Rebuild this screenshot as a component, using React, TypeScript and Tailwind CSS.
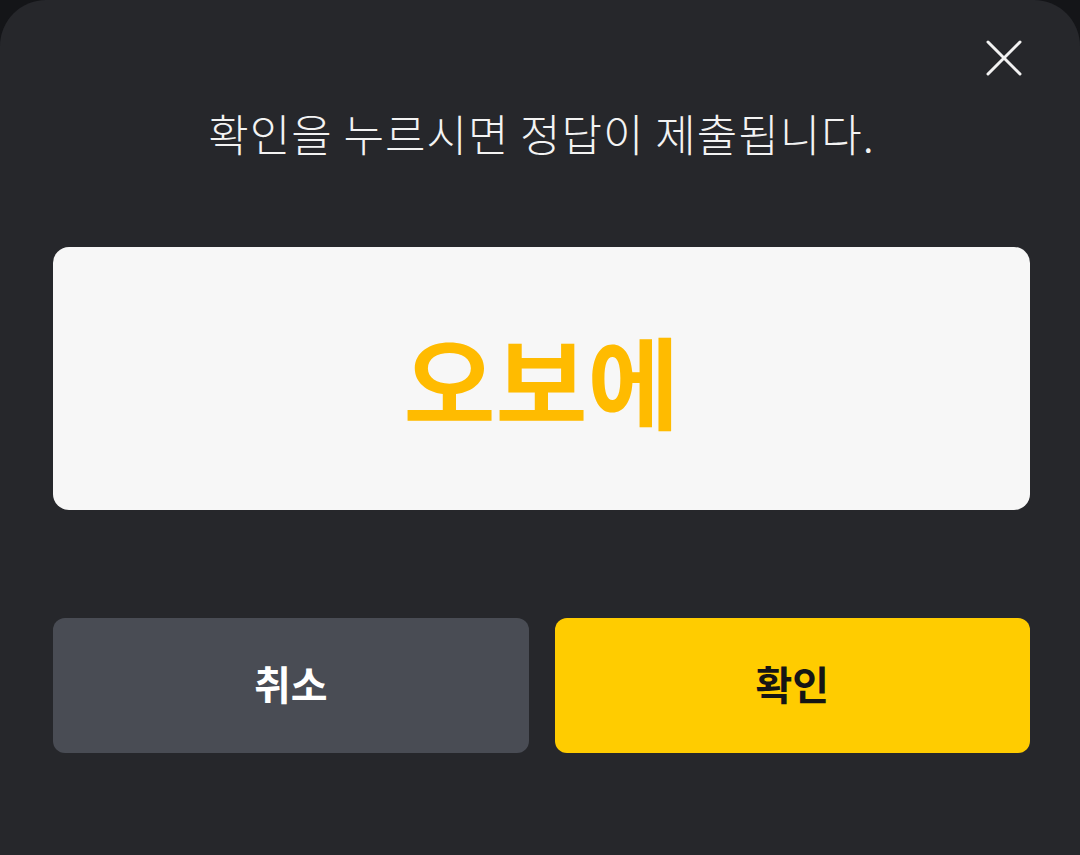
const App = () => {
  return (
    <div
      className="w-[1080px] h-[855px] bg-[#141518] overflow-hidden"
      style={{ fontFamily: '"Noto Sans CJK KR", "Noto Sans", sans-serif' }}
    >
      <div className="relative h-full rounded-t-[46px] bg-[#26272b] pl-[53px] pr-[50px] pt-[107px]">
        <button className="absolute top-[36px] right-[54px] w-[44px] h-[44px] flex items-center justify-center">
          <svg width="36" height="36" viewBox="0 0 36 36" fill="none">
            <path d="M2 2L34 34M34 2L2 34" stroke="#f2f2f2" strokeWidth="3" strokeLinecap="round" />
          </svg>
        </button>
        <div className="text-center text-[44px] leading-[52px] text-[#f3f3f3] font-light tracking-[1px]">
          확인을 누르시면 정답이 제출됩니다.
        </div>
        <div className="mt-[88px] h-[263px] rounded-[16px] bg-[#f7f7f7] flex items-center justify-center">
          <span className="text-[100px] leading-none font-bold text-[#ffbb00]">오보에</span>
        </div>
        <div className="mt-[108px] flex gap-[26px]">
          <button className="flex-1 h-[135px] rounded-[12px] bg-[#494c54] text-white text-[40px] leading-none font-bold pb-[6px]">
            취소
          </button>
          <button className="flex-1 h-[135px] rounded-[12px] bg-[#ffcc00] text-[#151515] text-[40px] leading-none font-bold pb-[6px]">
            확인
          </button>
        </div>
      </div>
    </div>
  );
};

export default App;
